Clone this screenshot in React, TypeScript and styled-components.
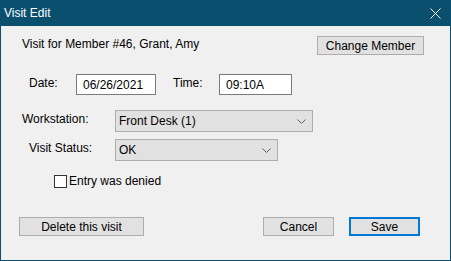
import styled, { createGlobalStyle } from 'styled-components';

const GlobalStyle = createGlobalStyle`
  html, body {
    margin: 0;
    padding: 0;
    background: #f0f0f0;
  }
  * {
    box-sizing: border-box;
  }
`;

const Window = styled.div`
  width: 451px;
  height: 261px;
  display: flex;
  flex-direction: column;
  background: #f0f0f0;
  border: 1px solid #0b4f6f;
  border-top: 0;
  font-family: 'Liberation Sans', Arial, sans-serif;
  font-size: 12px;
  color: #000;
`;

const TitleBar = styled.div`
  height: 26px;
  flex: none;
  display: flex;
  align-items: center;
  justify-content: space-between;
  padding: 0 0 0 3px;
  background: #0b4f6f;
  color: #fff;
`;

const Title = styled.span`
  font-size: 12px;
`;

const CloseButton = styled.button`
  width: 30px;
  height: 26px;
  border: 0;
  padding: 0;
  background: transparent;
  display: flex;
  align-items: center;
  justify-content: center;
`;

const Body = styled.div`
  flex: 1;
  display: flex;
  flex-direction: column;
`;

const Row = styled.div<{ $top: number; $left: number; $right?: number }>`
  display: flex;
  align-items: flex-start;
  margin-top: ${({ $top }) => $top}px;
  padding-left: ${({ $left }) => $left}px;
  padding-right: ${({ $right }) => $right ?? 0}px;
`;

const Label = styled.span<{ $width: number; $gap?: number }>`
  width: ${({ $width }) => $width}px;
  flex: none;
  margin-left: ${({ $gap }) => $gap ?? 0}px;
  padding-top: 2px;
  white-space: nowrap;
`;

const MemberText = styled.span`
  padding-top: 1px;
  flex: 1;
`;

const TextBox = styled.div<{ $width: number }>`
  width: ${({ $width }) => $width}px;
  height: 21px;
  flex: none;
  display: flex;
  align-items: center;
  padding-left: 6px;
  background: #fff;
  border: 1px solid #7a7a7a;
`;

const Select = styled.div<{ $width: number }>`
  width: ${({ $width }) => $width}px;
  height: 22px;
  flex: none;
  display: flex;
  align-items: center;
  justify-content: space-between;
  padding: 0 6px 0 3px;
  background: #e1e1e1;
  border: 1px solid #adadad;
`;

const Button = styled.button<{ $width: number; $gap?: number; $primary?: boolean }>`
  width: ${({ $width }) => $width}px;
  height: 19px;
  flex: none;
  margin-left: ${({ $gap }) => $gap ?? 0}px;
  padding: 0;
  font-family: inherit;
  font-size: 12px;
  color: #000;
  background: #e1e1e1;
  border: ${({ $primary }) => ($primary ? '2px solid #0078d7' : '1px solid #adadad')};
`;

const Box = styled.span`
  width: 13px;
  height: 13px;
  flex: none;
  margin-right: 2px;
  background: #fff;
  border: 1px solid #333;
`;

const CheckLabel = styled.span`
  line-height: 13px;
`;

const Spacer = styled.div`
  flex: 1;
`;

const Chevron = () => (
  <svg width="9" height="5" viewBox="0 0 9 5">
    <polyline points="0.5,0.5 4.5,4.5 8.5,0.5" fill="none" stroke="#606060" strokeWidth="1" />
  </svg>
);

const App = () => (
  <>
    <GlobalStyle />
    <Window>
      <TitleBar>
        <Title>Visit Edit</Title>
        <CloseButton aria-label="Close">
          <svg width="11" height="11" viewBox="0 0 11 11">
            <path d="M0.5 0.5 L10.5 10.5 M10.5 0.5 L0.5 10.5" stroke="#fff" strokeWidth="1" />
          </svg>
        </CloseButton>
      </TitleBar>
      <Body>
        <Row $top={10} $left={21} $right={26}>
          <MemberText>Visit for Member #46, Grant, Amy</MemberText>
          <Button $width={107}>Change Member</Button>
        </Row>
        <Row $top={19} $left={28}>
          <Label $width={47}>Date:</Label>
          <TextBox $width={80}>06/26/2021</TextBox>
          <Label $width={46} $gap={17}>Time:</Label>
          <TextBox $width={73}>09:10A</TextBox>
        </Row>
        <Row $top={15} $left={21}>
          <Label $width={93}>Workstation:</Label>
          <Select $width={198}>
            Front Desk (1)
            <Chevron />
          </Select>
        </Row>
        <Row $top={7} $left={28}>
          <Label $width={86}>Visit Status:</Label>
          <Select $width={163}>
            OK
            <Chevron />
          </Select>
        </Row>
        <Row $top={14} $left={53}>
          <Box />
          <CheckLabel>Entry was denied</CheckLabel>
        </Row>
        <Row $top={29} $left={18} $right={30}>
          <Button $width={125}>Delete this visit</Button>
          <Spacer />
          <Button $width={71}>Cancel</Button>
          <Button $width={71} $gap={15} $primary>
            Save
          </Button>
        </Row>
      </Body>
    </Window>
  </>
);

export default App;
